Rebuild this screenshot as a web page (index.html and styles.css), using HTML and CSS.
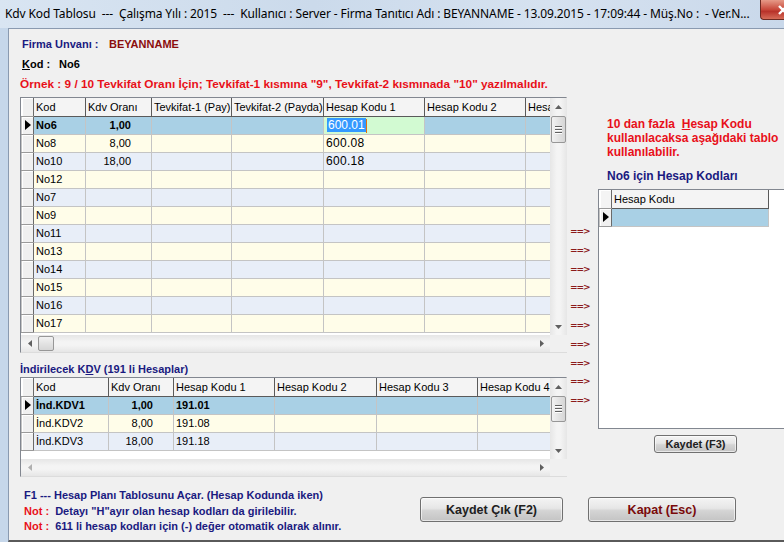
FILE: index.html
```html
<!DOCTYPE html>
<html lang="tr">
<head>
<meta charset="utf-8">
<title>Kdv Kod Tablosu</title>
<link rel="stylesheet" href="styles.css">
</head>
<body>
<div class="window">
  <div class="titlebar">
    <span class="title">Kdv Kod Tablosu  ---  Çalışma Yılı : 2015  ---  Kullanıcı : Server - Firma Tanıtıcı Adı : BEYANNAME - 13.09.2015 - 17:09:44 - Müş.No :  - Ver.N...</span>
    <span class="close"><svg width="24" height="20" viewBox="0 0 24 20"><path d="M18 6 L26 14 M26 6 L18 14" stroke="#fff" stroke-width="2.4"/></svg></span>
  </div>
  <div class="frame">
    <div class="frame-left"></div>
    <div class="client">
      <div class="info">
        <div class="line"><span class="lbl navy">Firma Unvanı :</span><span class="darkred">BEYANNAME</span></div>
        <div class="line"><span class="lbl kod"><u>K</u>od :</span><span>No6</span></div>
        <div class="line red wide">Örnek : 9 / 10 Tevkifat Oranı İçin; Tevkifat-1 kısmına "9", Tevkifat-2 kısmınada "10" yazılmalıdır.</div>
      </div>
      <div class="main">
        <div class="leftcol">
          <div class="grid g1">
            <div class="gtable">
              <table class="wide-table">
                <colgroup><col class="c-ind"><col class="w52"><col class="w66"><col class="w80"><col class="w92"><col class="w101"><col class="w101"><col class="w25"></colgroup>
                <thead><tr><th class="ind"></th><th>Kod</th><th>Kdv Oranı</th><th>Tevkifat-1 (Pay)</th><th>Tevkifat-2 (Payda)</th><th>Hesap Kodu 1</th><th>Hesap Kodu 2</th><th>Hesap Kodu 3</th></tr></thead>
                <tbody>
                  <tr class="sel b"><td class="ind"><span class="tri"></span></td><td>No6</td><td class="num">1,00</td><td></td><td></td><td class="edit"><span class="hl">600.01</span><span class="caret"></span></td><td></td><td></td></tr>
                  <tr class="y"><td class="ind"></td><td>No8</td><td class="num">8,00</td><td></td><td></td><td class="code">600.08</td><td></td><td></td></tr>
                  <tr class="l"><td class="ind"></td><td>No10</td><td class="num">18,00</td><td></td><td></td><td class="code">600.18</td><td></td><td></td></tr>
                  <tr class="y"><td class="ind"></td><td>No12</td><td></td><td></td><td></td><td></td><td></td><td></td></tr>
                  <tr class="l"><td class="ind"></td><td>No7</td><td></td><td></td><td></td><td></td><td></td><td></td></tr>
                  <tr class="y"><td class="ind"></td><td>No9</td><td></td><td></td><td></td><td></td><td></td><td></td></tr>
                  <tr class="l"><td class="ind"></td><td>No11</td><td></td><td></td><td></td><td></td><td></td><td></td></tr>
                  <tr class="y"><td class="ind"></td><td>No13</td><td></td><td></td><td></td><td></td><td></td><td></td></tr>
                  <tr class="l"><td class="ind"></td><td>No14</td><td></td><td></td><td></td><td></td><td></td><td></td></tr>
                  <tr class="y"><td class="ind"></td><td>No15</td><td></td><td></td><td></td><td></td><td></td><td></td></tr>
                  <tr class="l"><td class="ind"></td><td>No16</td><td></td><td></td><td></td><td></td><td></td><td></td></tr>
                  <tr class="y"><td class="ind"></td><td>No17</td><td></td><td></td><td></td><td></td><td></td><td></td></tr>
                </tbody>
              </table>
            </div>
            <div class="vscroll">
              <span class="arr"><svg width="7" height="4" viewBox="0 0 7 4"><path d="M0 4 L3.5 0 L7 4Z" fill="#606060"/></svg></span>
              <span class="vthumb g1thumb"><i></i><i></i><i></i></span>
              <span class="track"></span>
              <span class="arr"><svg width="7" height="4" viewBox="0 0 7 4"><path d="M0 0 L3.5 4 L7 0Z" fill="#606060"/></svg></span>
            </div>
            <div class="hscroll">
              <span class="arr"><svg width="4" height="7" viewBox="0 0 4 7"><path d="M4 0 L0 3.5 L4 7Z" fill="#606060"/></svg></span>
              <span class="hthumb"></span>
              <span class="track"></span>
              <span class="arr"><svg width="4" height="7" viewBox="0 0 4 7"><path d="M0 0 L4 3.5 L0 7Z" fill="#606060"/></svg></span>
            </div>
            <div class="corner"></div>
          </div>
          <div class="sublabel">İndirilecek K<u>D</u>V (191 li Hesaplar)</div>
          <div class="grid g2">
            <div class="gtable">
              <table class="wide-table">
                <colgroup><col class="c-ind"><col class="w75"><col class="w65"><col class="w101"><col class="w102"><col class="w101"><col class="w73"></colgroup>
                <thead><tr><th class="ind"></th><th>Kod</th><th>Kdv Oranı</th><th>Hesap Kodu 1</th><th>Hesap Kodu 2</th><th>Hesap Kodu 3</th><th>Hesap Kodu 4</th></tr></thead>
                <tbody>
                  <tr class="sel b"><td class="ind"><span class="tri"></span></td><td>İnd.KDV1</td><td class="num">1,00</td><td>191.01</td><td></td><td></td><td></td></tr>
                  <tr class="y"><td class="ind"></td><td>İnd.KDV2</td><td class="num">8,00</td><td>191.08</td><td></td><td></td><td></td></tr>
                  <tr class="l"><td class="ind"></td><td>İnd.KDV3</td><td class="num">18,00</td><td>191.18</td><td></td><td></td><td></td></tr>
                </tbody>
              </table>
            </div>
            <div class="vscroll">
              <span class="arr"><svg width="7" height="4" viewBox="0 0 7 4"><path d="M0 4 L3.5 0 L7 4Z" fill="#606060"/></svg></span>
              <span class="vthumb g2thumb"><i></i><i></i><i></i></span>
              <span class="track"></span>
              <span class="arr"><svg width="7" height="4" viewBox="0 0 7 4"><path d="M0 0 L3.5 4 L7 0Z" fill="#606060"/></svg></span>
            </div>
            <div class="hscroll">
              <span class="arr"><svg width="4" height="7" viewBox="0 0 4 7"><path d="M4 0 L0 3.5 L4 7Z" fill="#b0b0b0"/></svg></span>
              <span class="track"></span>
              <span class="arr"><svg width="4" height="7" viewBox="0 0 4 7"><path d="M0 0 L4 3.5 L0 7Z" fill="#606060"/></svg></span>
            </div>
            <div class="corner"></div>
          </div>
        </div>
        <div class="arrows">
          <div>==&gt;</div><div>==&gt;</div><div>==&gt;</div><div>==&gt;</div><div>==&gt;</div>
          <div>==&gt;</div><div>==&gt;</div><div>==&gt;</div><div>==&gt;</div><div>==&gt;</div>
        </div>
        <div class="rightcol">
          <div class="note red">10 dan fazla&nbsp; <u>H</u>esap Kodu<br>kullanılacaksa aşağıdaki tablo<br>kullanılabilir.</div>
          <div class="navy subtitle">No6 için Hesap Kodları</div>
          <div class="box">
            <table class="small">
              <colgroup><col class="c-ind"><col class="w157"></colgroup>
              <thead><tr><th class="ind"></th><th>Hesap Kodu</th></tr></thead>
              <tbody><tr class="sel"><td class="ind"><span class="tri"></span></td><td></td></tr></tbody>
            </table>
          </div>
          <div class="f3row"><span class="btn sbtn">Kaydet (F3)</span></div>
        </div>
      </div>
      <div class="footer">
        <div class="help">
          <div class="navy">F1 --- Hesap Planı Tablosunu Açar. (Hesap Kodunda iken)</div>
          <div class="navy"><span class="red">Not :</span>&nbsp; Detayı "H"ayır olan hesap kodları da girilebilir.</div>
          <div class="navy"><span class="red">Not :</span>&nbsp; 611 li hesap kodları için (-) değer otomatik olarak alınır.</div>
        </div>
        <span class="btn big save">Kaydet Çık (F2)</span>
        <span class="btn big close-btn">Kapat (Esc)</span>
      </div>
    </div>
  </div>
</div>
</body>
</html>
```
FILE: styles.css
```css
* { box-sizing: border-box; }
html, body { margin: 0; padding: 0; }
body {
  width: 784px;
  height: 542px;
  overflow: hidden;
  font-family: "Liberation Sans", Arial, sans-serif;
  font-size: 11px;
  color: #000;
}
.window {
  width: 784px;
  height: 542px;
  display: flex;
  flex-direction: column;
  background: #c6d7ea;
}
.titlebar {
  height: 28px;
  flex: none;
  display: flex;
  align-items: flex-start;
  background: linear-gradient(90deg, #d9e5f2, #cbdaeb 40%, #d6e2f0 70%, #c9d8ea);
}
.title {
  white-space: pre;
  font-family: "Noto Sans", "Open Sans", sans-serif;
  font-size: 12px;
  line-height: 28px;
  padding-left: 5px;
  color: #000;
  flex: 1;
  overflow: hidden;
  letter-spacing: -0.12px;
}
.close {
  width: 24px;
  height: 20px;
  flex: none;
  background: linear-gradient(#e69a88, #c8483a 50%, #b8322a 60%, #d66c58);
  border: 1px solid #6e2a22;
  border-top: none;
  border-right: none;
  border-radius: 0 0 0 4px;
  overflow: hidden;
  display: block;
}
.close svg { display: block; }
.frame { flex: 1; display: flex; }
.frame-left { width: 8px; flex: none; }
.client {
  flex: 1;
  background: #f0f0f0;
  border-top: 1px solid #8a9ab0;
  border-left: 1px solid #8a9ab0;
  border-bottom: 2px solid #5a5a5a;
  padding-left: 11px;
}
.info { padding-top: 5px; }
.line {
  height: 20px;
  line-height: 20px;
  font-weight: bold;
  font-size: 11px;
  white-space: nowrap;
}
.lbl { display: inline-block; margin-left: 2px; }
.lbl.navy { width: 87px; }
.lbl.kod { width: 37px; }
.navy { color: #1a1a80; }
.darkred { color: #8b0d0d; }
.red { color: #e8101a; }
.wide { font-size: 11.8px; }

.main { display: flex; margin-top: 3px; }
.leftcol { width: 547px; flex: none; }

.grid {
  display: grid;
  grid-template-columns: 529px 17px;
  grid-template-rows: 1fr 17px;
  border: 1px solid #828790;
  border-right-color: #dcdcdc;
  border-bottom-color: #dcdcdc;
  background: #fff;
}
.g1 { height: 256px; }
.g2 { height: 100px; }
.gtable { overflow: hidden; background: #fff; }
table {
  border-collapse: collapse;
  table-layout: fixed;
  font-family: "Liberation Sans", Arial, sans-serif;
  font-size: 11px;
}
.wide-table { width: 529px; }
table.small { width: 169px; }
.c-ind { width: 12px; }
.w25 { width: 25px; }
.w52 { width: 52px; }
.w65 { width: 65px; }
.w66 { width: 66px; }
.w73 { width: 73px; }
.w75 { width: 75px; }
.w80 { width: 80px; }
.w92 { width: 92px; }
.w101 { width: 101px; }
.w102 { width: 102px; }
.w157 { width: 157px; }
th, td {
  height: 18px;
  padding: 0 2px;
  white-space: nowrap;
  overflow: hidden;
  text-align: left;
  font-weight: normal;
  line-height: 16px;
}
th {
  background: #f4f4f4;
  border-right: 1px solid #5a5a5a;
  border-bottom: 1px solid #5a5a5a;
  color: #000;
}
td { border: 1px solid #c4c4c4; border-top: none; }
td.ind, th.ind {
  background: #f0f0f0;
  border-right: 1px solid #6a6a6a;
  border-bottom: 1px solid #9a9a9a;
  box-shadow: inset 1px 1px 0 #fff;
  padding: 0;
}
.tri {
  display: block;
  width: 0;
  height: 0;
  margin-left: 3px;
  border-top: 5px solid transparent;
  border-bottom: 5px solid transparent;
  border-left: 6px solid #000;
}
tr.sel td { background: #a9d0e5; }
tr.sel td.ind { background: #f0f0f0; }
tr.y td { background: #fffde9; }
tr.l td { background: #e8eef8; }
tr.y td.ind, tr.l td.ind { background: #f0f0f0; }
tr.b td { font-weight: bold; }
td.num { text-align: right; padding-right: 20px; }
tr.sel td.edit { background: #d2fad2; padding-left: 3px; }
.hl {
  background: #3399ff;
  color: #fff;
  font-weight: normal;
  font-size: 12px;
  padding: 0 1px;
}
.caret {
  display: inline-block;
  width: 1px;
  height: 14px;
  background: #e07010;
  vertical-align: middle;
}
td.code { font-size: 12px; letter-spacing: 0.3px; }

.vscroll, .hscroll {
  display: flex;
  background: linear-gradient(90deg, #e6e6e6, #f4f4f4 40%, #f4f4f4 60%, #e6e6e6);
}
.vscroll { flex-direction: column; grid-row: 1 / 2; grid-column: 2 / 3; }
.hscroll {
  grid-row: 2 / 3; grid-column: 1 / 2;
  background: linear-gradient(#e6e6e6, #f4f4f4 40%, #f4f4f4 60%, #e6e6e6);
}
.corner { background: #f0f0f0; }
.arr {
  flex: none;
  width: 17px;
  height: 17px;
  display: flex;
  align-items: center;
  justify-content: center;
}
.track { flex: 1; }
.vthumb {
  flex: none;
  margin: 1px 1px 0;
  width: 15px;
  border: 1px solid #979797;
  border-radius: 2px;
  background: linear-gradient(90deg, #f2f2f2, #e3e3e3 50%, #d6d6d6);
  display: flex;
  flex-direction: column;
  align-items: center;
  justify-content: center;
  gap: 1px;
}
.vthumb i { display: block; width: 7px; height: 1px; background: #606060; border-bottom: 1px solid #fff; box-sizing: content-box; }
.g1thumb { height: 27px; }
.g2thumb { height: 26px; margin-top: 1px; }
.hthumb {
  flex: none;
  width: 16px;
  margin: 1px 0;
  border: 1px solid #979797;
  border-radius: 2px;
  background: linear-gradient(#f2f2f2, #e3e3e3 50%, #d6d6d6);
}

.sublabel {
  height: 24px;
  padding-top: 9px;
  line-height: 14px;
  font-weight: bold;
  color: #1a1a80;
}

.arrows {
  width: 31px;
  flex: none;
  padding-top: 125px;
  padding-left: 3px;
  color: #8b1a1a;
  font-size: 9px;
  font-weight: bold;
  font-family: "DejaVu Sans", sans-serif;
}
.arrows div { height: 18.8px; line-height: 18.8px; letter-spacing: -1px; }

.rightcol { flex: 1; }
.note {
  margin-top: 20px;
  padding-left: 9px;
  font-weight: bold;
  font-size: 12px;
  line-height: 14px;
}
.subtitle {
  margin-top: 10px;
  padding-left: 9px;
  font-weight: bold;
  font-size: 12px;
  line-height: 14px;
}
.box {
  margin-top: 6px;
  height: 240px;
  background: #fff;
  border: 1px solid #828790;
  border-right: none;
}
.box th { background: #f4f4f4; }
.f3row { padding-left: 56px; padding-top: 6px; }

.btn {
  display: inline-flex;
  align-items: center;
  justify-content: center;
  border: 1px solid #707070;
  border-radius: 3px;
  background: linear-gradient(#f4f4f4, #e6e6e6 45%, #d4d4d4 55%, #c4c4c4);
  box-shadow: inset 0 0 0 1px rgba(255,255,255,0.6);
  font-weight: bold;
  color: #202020;
  font-family: "Liberation Sans", Arial, sans-serif;
}
.sbtn { width: 83px; height: 18px; font-size: 11px; }

.footer {
  display: flex;
  align-items: flex-start;
  margin-top: 11px;
}
.help {
  width: 389px;
  padding-left: 4px;
  font-weight: bold;
  font-size: 11px;
  line-height: 15.5px;
}
.big { width: 143px; height: 25px; margin-top: 9px; font-size: 12.5px; }
.save { margin-left: 11px; }
.close-btn { width: 148px; margin-left: 25px; color: #7a0a0a; }
```
